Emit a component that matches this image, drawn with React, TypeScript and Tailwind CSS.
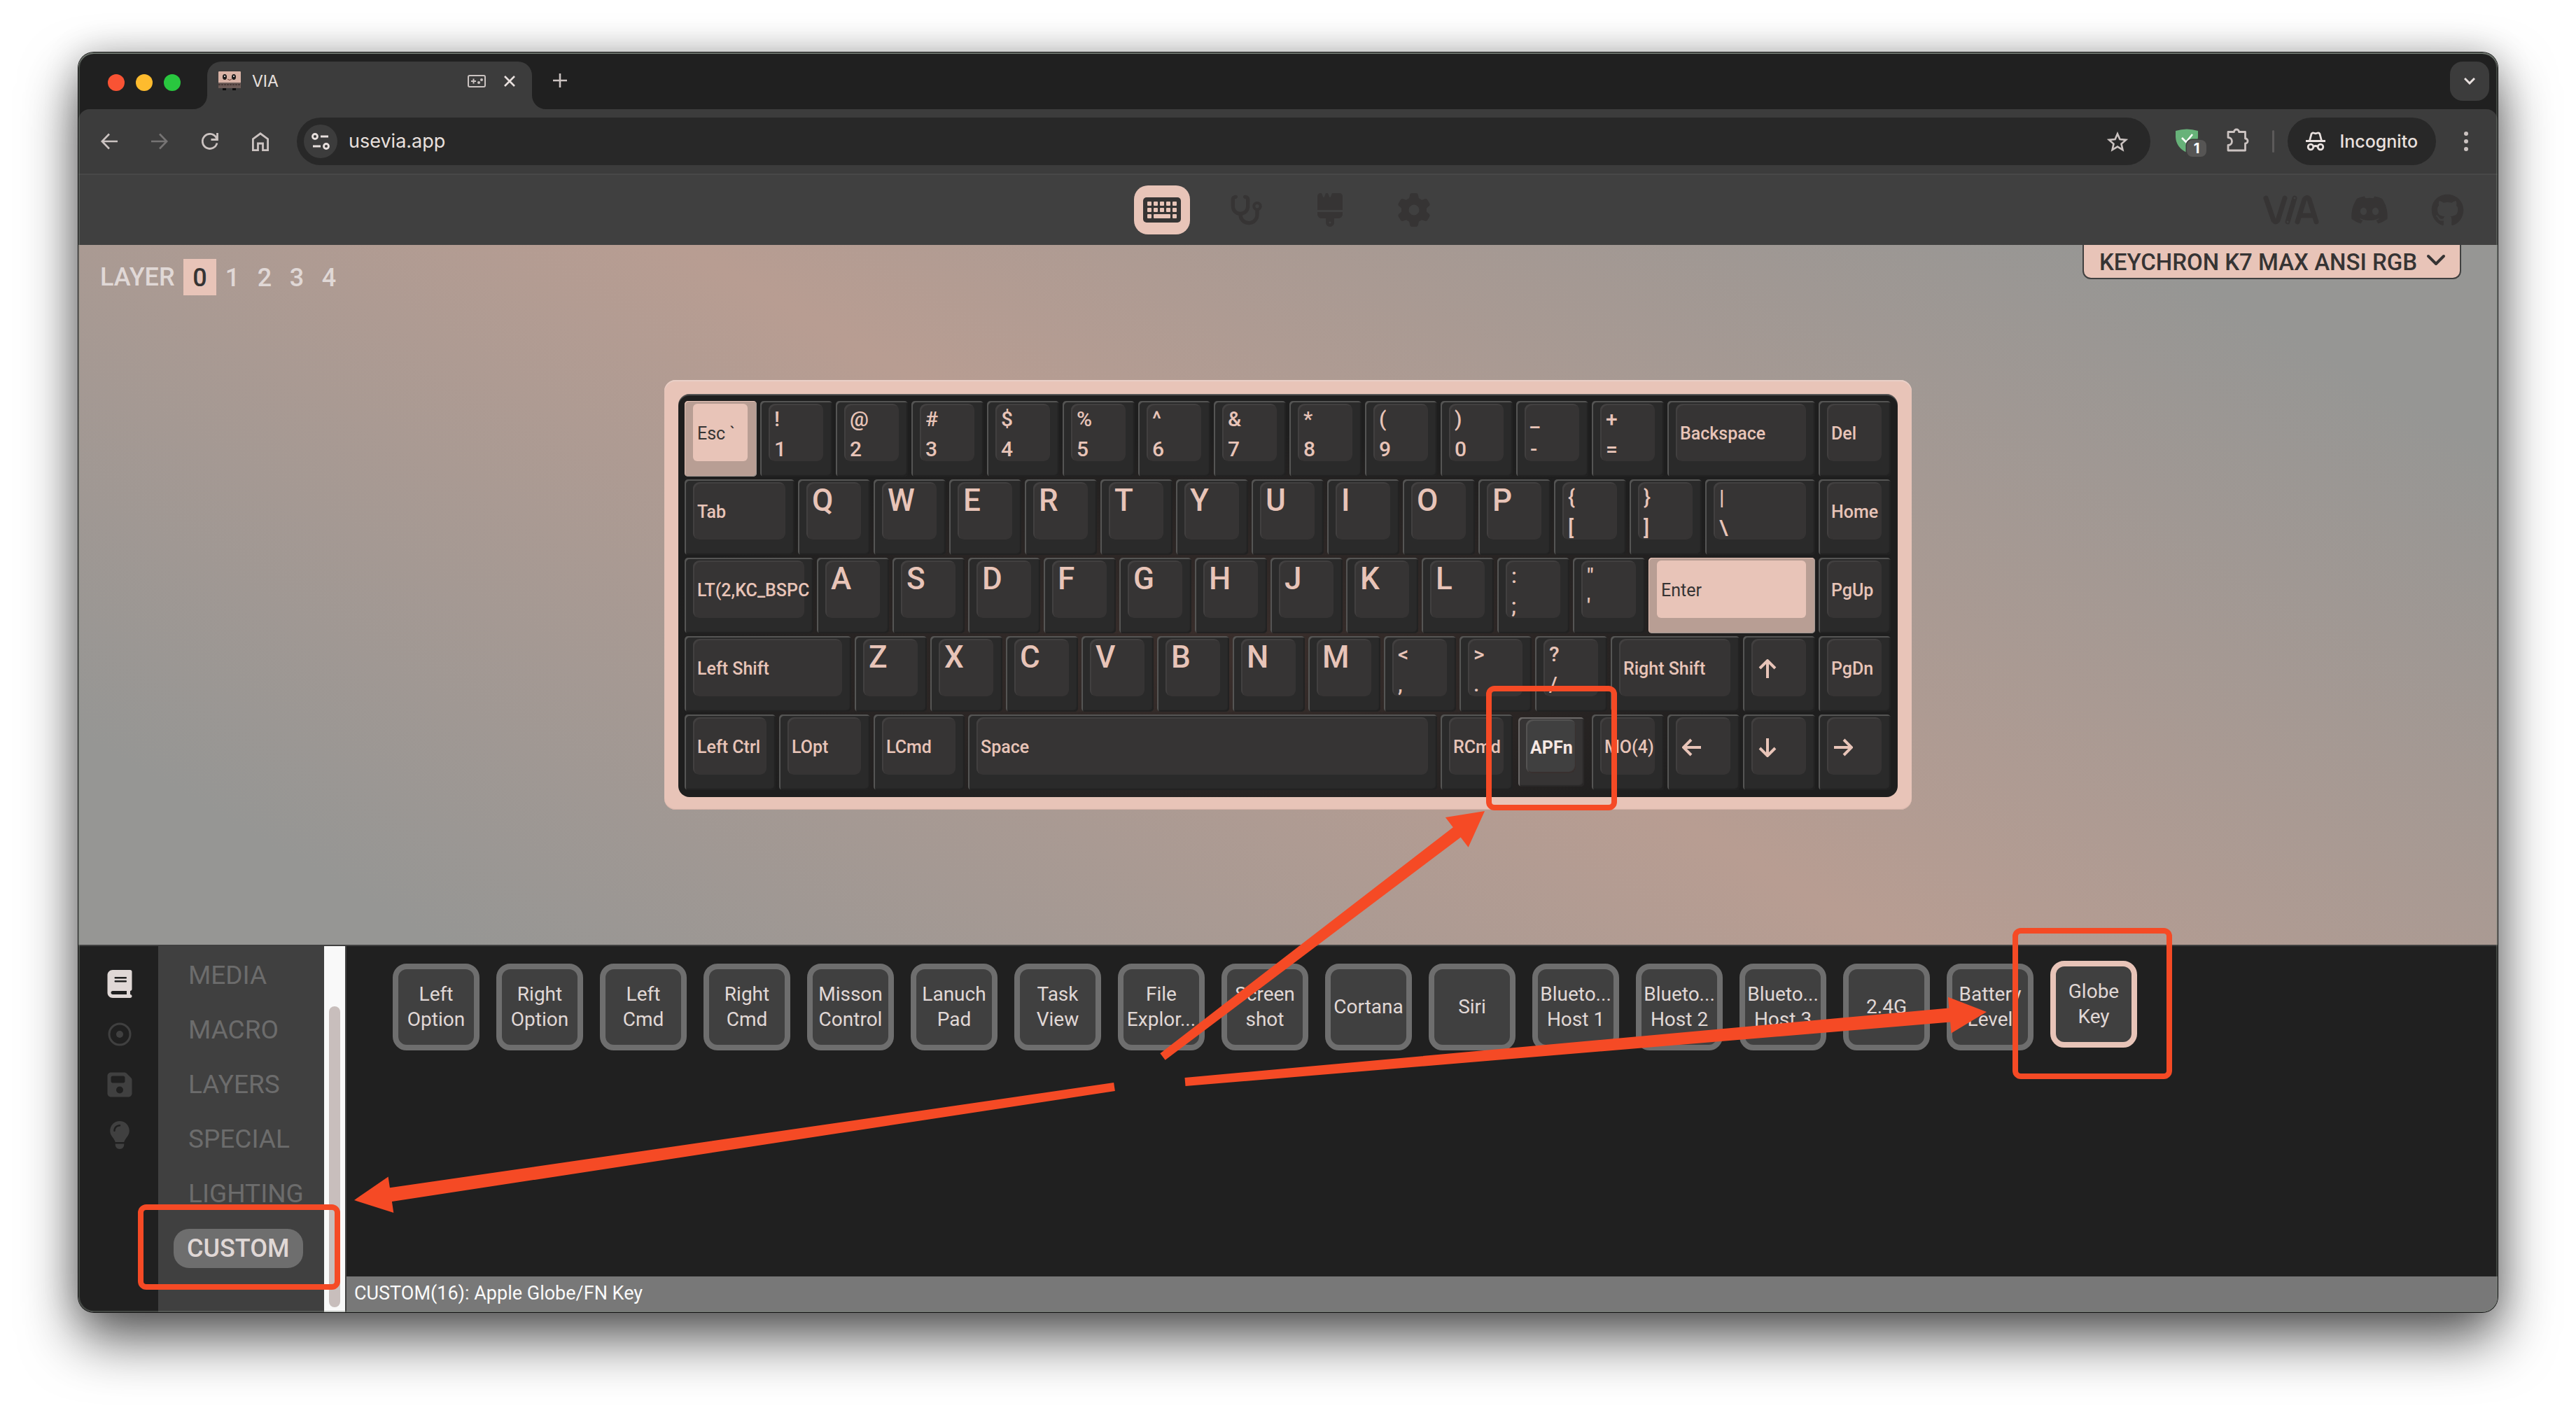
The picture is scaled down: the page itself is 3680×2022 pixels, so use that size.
import React from "react";
import {
  FaStethoscope,
  FaBrush,
  FaGear,
  FaDiscord,
  FaGithub,
  FaBook,
  FaFloppyDisk,
  FaLightbulb,
} from "react-icons/fa6";

type KeyDef = {
  span: string;
  label?: string;
  pair?: [string, string];
  icon?: "up" | "down" | "left" | "right";
  accent?: boolean;
  selected?: boolean;
};

const U1 = "col-span-4";
const U125 = "col-span-5";
const U15 = "col-span-6";
const U175 = "col-span-7";
const U2 = "col-span-8";
const U225 = "col-span-9";
const U625 = "col-span-25";

const letters = (s: string): KeyDef[] => s.split("").map((label) => ({ span: U1, label }));
const pairs = (s: string[]): KeyDef[] =>
  s.map((p) => ({ span: U1, pair: [p[0], p[1]] as [string, string] }));

const KEYS: KeyDef[] = [
  { span: U1, label: "Esc `", accent: true },
  ...pairs(["!1", "@2", "#3", "$4", "%5", "^6", "&7", "*8", "(9", ")0", "_-", "+="]),
  { span: U2, label: "Backspace" },
  { span: U1, label: "Del" },

  { span: U15, label: "Tab" },
  ...letters("QWERTYUIOP"),
  ...pairs(["{[", "}]"]),
  { span: U15, pair: ["|", "\\"] },
  { span: U1, label: "Home" },

  { span: U175, label: "LT(2,KC_BSPC" },
  ...letters("ASDFGHJKL"),
  ...pairs([":;", "\"'"]),
  { span: U225, label: "Enter", accent: true },
  { span: U1, label: "PgUp" },

  { span: U225, label: "Left Shift" },
  ...letters("ZXCVBNM"),
  ...pairs(["<,", ">.", "?/"]),
  { span: U175, label: "Right Shift" },
  { span: U1, icon: "up" },
  { span: U1, label: "PgDn" },

  { span: U125, label: "Left Ctrl" },
  { span: U125, label: "LOpt" },
  { span: U125, label: "LCmd" },
  { span: U625, label: "Space" },
  { span: U1, label: "RCmd" },
  { span: U1, label: "APFn", selected: true },
  { span: U1, label: "MO(4)" },
  { span: U1, icon: "left" },
  { span: U1, icon: "down" },
  { span: U1, icon: "right" },
];

const ARROWS = {
  left: "M27 14H3M13 3L2 14l11 11",
  right: "M1 14h24M15 3l11 11-11 11",
  up: "M14 27V3M3 13L14 2l11 11",
  down: "M14 1v24M3 15l11 11 11-11",
};

function Legend({ k }: { k: KeyDef }) {
  if (k.icon) {
    return (
      <span className="flex h-full items-center pl-[9px] pt-1">
        <svg viewBox="0 0 28 28" className="size-7" fill="none" stroke="currentColor" strokeWidth="4">
          <path d={ARROWS[k.icon]} />
        </svg>
      </span>
    );
  }
  if (k.pair) {
    return (
      <span className="flex flex-col pl-2 text-[30px] leading-[43px]">
        <span>{k.pair[0]}</span>
        <span>{k.pair[1]}</span>
      </span>
    );
  }
  if (k.label && k.label.length === 1) {
    return <span className="block pl-2 text-[44px] leading-[52px]">{k.label}</span>;
  }
  return (
    <span className="flex h-full items-center whitespace-nowrap pl-[6px] pt-1 text-[25px]">
      {k.label}
    </span>
  );
}

function Key({ k }: { k: KeyDef }) {
  let shell =
    "mr-[5px] mb-1 pl-3 pr-[13px] pt-1 pb-[22px] rounded-[5px] bg-[#2a2a2a] text-[#e8c4b8] shadow-[inset_2px_2px_0_#555554,inset_-2px_-2px_1px_#222222]";
  let cap =
    "h-full rounded-[9px] bg-[#363434] shadow-[inset_2px_2px_1px_#434141] font-medium";
  if (k.accent) {
    shell =
      "mr-[5px] mb-1 pl-3 pr-[13px] pt-1 pb-[22px] rounded-[5px] bg-[#b89e94] text-[#363434] shadow-[inset_1px_1px_0_#e8c4b8,inset_-1px_-1px_0_#9d9490]";
    cap = "h-full rounded-md bg-[#e8c4b8] font-normal";
  }
  if (k.selected) {
    shell =
      "ml-[3px] mr-[11px] mt-1 mb-[9px] pl-[11px] pr-3 pt-[3px] pb-[19px] rounded-[5px] bg-[#363434] text-[#f7e8e3] shadow-[inset_2px_2px_0_#6c6968,inset_-2px_-2px_1px_#2a2828]";
    cap =
      "h-full rounded-[9px] bg-[#404040] shadow-[inset_2px_2px_1px_#555453,inset_-1px_-2px_1px_#382f2e] font-bold";
  }
  return (
    <button
      type="button"
      className={k.span + " block text-left " + shell}
      aria-label={k.icon ? "Arrow " + k.icon : undefined}
    >
      <span className={"block " + cap}>
        <Legend k={k} />
      </span>
    </button>
  );
}

const CUSTOM_KEYS: string[][] = [
  ["Left", "Option"],
  ["Right", "Option"],
  ["Left", "Cmd"],
  ["Right", "Cmd"],
  ["Misson", "Control"],
  ["Lanuch", "Pad"],
  ["Task", "View"],
  ["File", "Explor..."],
  ["Screen", "shot"],
  ["Cortana"],
  ["Siri"],
  ["Blueto...", "Host 1"],
  ["Blueto...", "Host 2"],
  ["Blueto...", "Host 3"],
  ["2.4G"],
  ["Battery", "Level"],
  ["Globe", "Key"],
];

function arrow(
  tx: number,
  ty: number,
  px: number,
  py: number,
  tail = 6,
  neck = 10,
  head = 53,
  wing = 26
) {
  const len = Math.hypot(px - tx, py - ty);
  const ux = (px - tx) / len;
  const uy = (py - ty) / len;
  const bx = px - ux * head;
  const by = py - uy * head;
  const at = (x: number, y: number, d: number) =>
    `${(x - uy * d).toFixed(1)},${(y + ux * d).toFixed(1)}`;
  return [
    at(tx, ty, tail),
    at(bx, by, neck),
    at(bx, by, wing),
    `${px},${py}`,
    at(bx, by, -wing),
    at(bx, by, -neck),
    at(tx, ty, -tail),
  ].join(" ");
}

function TabStrip() {
  return (
    <div className="flex h-[81px] items-end bg-[#202020] pr-3">
      <div className="flex h-[76px] items-center gap-4 pl-[42px]">
        <button type="button" aria-label="Close window" className="size-6 rounded-full bg-[#f95334]" />
        <button type="button" aria-label="Minimise window" className="size-6 rounded-full bg-[#febb2e]" />
        <button type="button" aria-label="Zoom window" className="size-6 rounded-full bg-[#29c73f]" />
      </div>
      <svg viewBox="0 0 20 20" className="ml-[18px] size-5 text-[#3c3c3c]" fill="currentColor">
        <path d="M0 20A20 20 0 0 0 20 0V20Z" />
      </svg>
      <div className="flex h-[68px] w-[464px] items-center rounded-t-[20px] bg-[#3c3c3c] px-4 pb-3">
        <svg viewBox="0 0 32 28" className="h-7 w-8">
          <rect width="32" height="17" rx="1" fill="#d9b3a6" />
          <rect y="16" width="32" height="8" fill="#6b5a56" />
          <path d="M0 19h32" stroke="#4a3a38" strokeWidth="2" strokeDasharray="3 1" />
          <ellipse cx="9" cy="8" rx="3" ry="4" fill="#1d1a1a" />
          <ellipse cx="22" cy="8" rx="3" ry="4" fill="#1d1a1a" />
          <circle cx="9" cy="7" r="1" fill="#fff" />
          <circle cx="22" cy="7" r="1" fill="#fff" />
          <path d="M13 11q3 3 6 0" stroke="#6b3f36" strokeWidth="1" fill="none" />
          <path d="M6 24h5v3H6zM20 24h5v3h-5z" fill="#0d0d0d" />
        </svg>
        <span className="ml-4 flex-1 font-['Inter'] text-[23px] leading-7 text-[#e8e0de]">VIA</span>
        <svg viewBox="0 0 26 18" className="h-[18px] w-[26px] text-[#cbc3c1]" fill="none" stroke="currentColor" strokeWidth="2">
          <rect x="1" y="1" width="24" height="16" rx="2" />
          <path d="M5 9h7M8.500 5.500v7" />
          <circle cx="16" cy="11" r="1" fill="currentColor" />
          <circle cx="20" cy="7" r="1" fill="currentColor" />
        </svg>
        <button type="button" aria-label="Close tab" className="ml-[26px] mr-2 text-[#e8e0de]">
          <svg viewBox="0 0 16 16" className="size-4" stroke="currentColor" strokeWidth="2.600">
            <path d="M1 1l14 14M15 1L1 15" />
          </svg>
        </button>
      </div>
      <svg viewBox="0 0 20 20" className="size-5 text-[#3c3c3c]" fill="currentColor">
        <path d="M0 0A20 20 0 0 0 20 20H0Z" />
      </svg>
      <button type="button" aria-label="New tab" className="mb-[30px] ml-[9px] text-[#cbc3c1]">
        <svg viewBox="0 0 22 22" className="size-[22px]" stroke="currentColor" strokeWidth="2.600">
          <path d="M11 1v20M1 11h20" />
        </svg>
      </button>
      <button
        type="button"
        aria-label="Search tabs"
        className="mb-3 ml-auto flex size-14 items-center justify-center rounded-[18px] bg-[#3c3c3c] text-[#e8e0de]"
      >
        <svg viewBox="0 0 16 10" className="h-[10px] w-4" fill="none" stroke="currentColor" strokeWidth="3">
          <path d="M1 1l7 7 7-7" />
        </svg>
      </button>
    </div>
  );
}

function Toolbar() {
  return (
    <div className="bg-[#202020]">
      <div className="flex h-[92px] items-center rounded-t-2xl bg-[#3c3c3c] pl-2 pr-[42px] font-['Inter'] text-[#cbc3c1]">
        <button type="button" aria-label="Back" className="flex w-[72px] justify-center">
          <svg viewBox="0 0 24 24" className="size-6" fill="none" stroke="currentColor" strokeWidth="2.600">
            <path d="M24 12H2M12 1.500L1.800 12 12 22.500" />
          </svg>
        </button>
        <button type="button" aria-label="Forward" className="flex w-[72px] justify-center text-[#767474]">
          <svg viewBox="0 0 24 24" className="size-6" fill="none" stroke="currentColor" strokeWidth="2.600">
            <path d="M0 12h22M12 1.500L22.200 12 12 22.500" />
          </svg>
        </button>
        <button type="button" aria-label="Reload" className="flex w-[72px] justify-center">
          <svg viewBox="0 0 24 24" className="size-6" fill="none" stroke="currentColor" strokeWidth="2.800">
            <path d="M22 14.500A10.500 10.500 0 1 1 20.500 6L22 8.500M22.500 0v9.500H13.500" />
          </svg>
        </button>
        <button type="button" aria-label="Home" className="flex w-[72px] justify-center">
          <svg viewBox="0 0 24 27" className="h-[27px] w-6" fill="none" stroke="currentColor" strokeWidth="2.800">
            <path d="M1.400 9.600L12 1.800l10.600 7.800v16H15.500V16h-7v9.600H1.400Z" />
          </svg>
        </button>
        <div className="ml-4 flex h-[68px] flex-1 items-center rounded-full bg-[#282828] pl-[10px] pr-8">
          <button
            type="button"
            aria-label="Site settings"
            className="flex size-12 items-center justify-center rounded-full bg-[#3c3c3c] text-[#e8e0de]"
          >
            <svg viewBox="0 0 26 24" className="h-6 w-[26px]" fill="none" stroke="currentColor" strokeWidth="2.800">
              <circle cx="5" cy="5" r="3.500" />
              <path d="M13 5h11M2 19h11" />
              <circle cx="21" cy="19" r="3.500" />
            </svg>
          </button>
          <input
            aria-label="Address"
            defaultValue="usevia.app"
            className="ml-4 flex-1 bg-transparent text-[27px] leading-8 text-[#e8e0de] outline-none"
          />
          <button type="button" aria-label="Bookmark this page">
            <svg viewBox="0 0 30 29" className="h-[29px] w-[30px]" fill="none" stroke="currentColor" strokeWidth="2.600">
              <path d="M15 3.200l3.400 7.900 8.600.8-6.500 5.700 1.900 8.400L15 21.600 7.600 26l1.900-8.400L3 11.900l8.600-.8Z" />
            </svg>
          </button>
        </div>
        <button type="button" aria-label="Shield extension" className="ml-9 flex h-11 w-11">
          <svg viewBox="0 0 44 44" className="size-11">
            <path d="M0 7Q16 2 32 7V16Q31 31 16 38Q1 31 0 16Z" fill="#67b279" />
            <path d="M9 17l6 6 9-11" fill="none" stroke="#fff" strokeWidth="2.600" />
            <rect x="14.500" y="18.500" width="31" height="31" rx="9" fill="#3c3c3c" />
            <rect x="16" y="20" width="28" height="24" rx="8" fill="#565554" />
            <text x="30" y="39" textAnchor="middle" fill="#fff" fontFamily="Inter, sans-serif" fontWeight="700" fontSize="20">
              1
            </text>
          </svg>
        </button>
        <button type="button" aria-label="Extensions" className="ml-7 pb-1">
          <svg viewBox="0 0 34 34" className="size-[34px]" fill="none" stroke="currentColor" strokeWidth="2.800" strokeLinejoin="round">
            <path d="M3 5.500H11.500A3.400 3.400 0 0 1 18.500 5.500H27.500V15A3.400 3.400 0 0 1 27.500 22V32H3V24.500A5 5 0 0 0 3 13.500Z" />
          </svg>
        </button>
        <span className="ml-8 h-8 w-[3px] rounded bg-[#5c5a5a]" />
        <button type="button" className="ml-[19px] flex h-[68px] items-center gap-5 rounded-full bg-[#282828] px-[26px] text-[#e8e0de]">
          <svg viewBox="0 0 28 28" className="size-7" fill="none" stroke="currentColor" strokeWidth="2.800">
            <path d="M0 13.500h28M5.500 13l2.500-9.500q1-2 3-1.500l3 .800 3-.800q2-.500 3 1.500L22.500 13" />
            <circle cx="7" cy="22" r="3.800" />
            <circle cx="21" cy="22" r="3.800" />
            <path d="M11 21.500q3-2 6 0" />
          </svg>
          <span className="text-[25px] font-medium leading-8">Incognito</span>
        </button>
        <button type="button" aria-label="Menu" className="ml-10">
          <svg viewBox="0 0 6 28" className="h-7 w-[6px]" fill="currentColor">
            <circle cx="3" cy="3" r="3" />
            <circle cx="3" cy="14" r="3" />
            <circle cx="3" cy="25" r="3" />
          </svg>
        </button>
      </div>
    </div>
  );
}

function AppHeader() {
  return (
    <header className="grid h-[102px] grid-cols-[1fr_auto_1fr] items-center border-t-2 border-[#484848] bg-[#404040] text-[#363434]">
      <span />
      <nav className="flex gap-10">
        <button type="button" aria-label="Configure" className="flex h-[70px] w-20 items-center justify-center rounded-[20px] bg-[#e8c4b8]">
          <svg viewBox="0 0 54 36" className="h-9 w-[54px]">
            <rect width="54" height="36" rx="5" fill="#363434" />
            <g fill="#e8c4b8">
              {[6, 15, 24, 33, 42].map((x) => (
                <rect key={x} x={x} y="6" width="6" height="6" rx="1" />
              ))}
              {[6, 15, 24, 33, 42].map((x) => (
                <rect key={x} x={x} y="15" width="6" height="6" rx="1" />
              ))}
              <rect x="6" y="24" width="6" height="6" rx="1" />
              <rect x="15" y="24" width="24" height="6" rx="1" />
              <rect x="42" y="24" width="6" height="6" rx="1" />
            </g>
          </svg>
        </button>
        <button type="button" aria-label="Key tester" className="flex h-[70px] w-20 items-center justify-center">
          <FaStethoscope className="size-12" />
        </button>
        <button type="button" aria-label="Design" className="flex h-[70px] w-20 items-center justify-center">
          <FaBrush className="size-12" />
        </button>
        <button type="button" aria-label="Settings" className="flex h-[70px] w-20 items-center justify-center">
          <FaGear className="size-12" />
        </button>
      </nav>
      <div className="flex items-center justify-end pr-12">
        <a href="#via" aria-label="VIA">
          <svg viewBox="0 0 80 42" className="h-[42px] w-20" fill="none" stroke="currentColor" strokeWidth="7" strokeLinecap="round" strokeLinejoin="round">
            <path d="M4 4L15 36Q18 40 21 36L31 4" />
            <path d="M45 4L35 38" />
            <path d="M49 38L59 6Q63 1 66 6L76 38M55 29H70" />
            <path d="M45 4h.1M35 38h.1" stroke="#404040" strokeWidth="3" />
          </svg>
        </a>
        <a href="#discord" aria-label="Discord" className="ml-11">
          <FaDiscord className="size-[56px]" />
        </a>
        <a href="#github" aria-label="GitHub" className="ml-[60px]">
          <FaGithub className="size-[47px]" />
        </a>
      </div>
    </header>
  );
}

function Stage() {
  return (
    <section className="relative flex flex-1 items-center justify-center bg-[linear-gradient(30deg,#969694_10%,#b89d92_50%,#969694_90%)] py-24">
      <div className="absolute left-[31px] top-5 flex h-[52px] items-center text-[36px] font-medium text-[#e0d8d6]">
        <span className="w-[119px]">LAYER</span>
        {["0", "1", "2", "3", "4"].map((n) => (
          <button
            key={n}
            type="button"
            className={n === "0" ? "h-full w-[47px] bg-[#e8c4b8] text-[#363434]" : "h-full w-[46px]"}
          >
            {n}
          </button>
        ))}
      </div>
      <div className="absolute right-[52px] top-0 flex h-[49px] items-center rounded-b-xl border-2 border-t-0 border-[#404040] bg-[#e8c4b8] pl-[22px] pr-5 text-[#363434]">
        <select
          aria-label="Keyboard"
          className="h-full appearance-none bg-transparent pb-1 pr-3 text-[33px] font-medium outline-none"
        >
          <option>KEYCHRON K7 MAX ANSI RGB</option>
        </select>
        <svg viewBox="0 0 28 18" className="mb-1 h-[18px] w-7" fill="none" stroke="currentColor" strokeWidth="4" strokeLinecap="round" strokeLinejoin="round">
          <path d="M3 3l11 11L25 3" />
        </svg>
      </div>
      <div className="rounded-2xl bg-[#e8c4b8] px-5 pb-[18px] pt-5 shadow-[inset_0_2px_1px_#e9d0c8,inset_0_-1px_1px_#d4b3a8]">
        <div className="grid auto-rows-[112px] grid-cols-[repeat(64,27px)] rounded-2xl bg-[#262423] bg-[radial-gradient(ellipse_at_45%_65%,#3b2f2c,#1e1e1e_60%)] pb-[6px] pl-[9px] pr-[5px] pt-[10px] shadow-[inset_0_2px_1px_#555]">
          {KEYS.map((k, i) => (
            <Key key={i} k={k} />
          ))}
        </div>
      </div>
    </section>
  );
}

function ConfigurePane() {
  return (
    <section className="flex h-[525px] border-t-2 border-[#404040] bg-[#202020]">
      <nav className="flex w-[114px] flex-col items-center pl-1 pt-[18px] text-[#404040]">
        <button type="button" aria-label="Keymap" className="flex h-[72px] items-center text-[#e0d8d6]">
          <FaBook className="size-10" />
        </button>
        <button type="button" aria-label="Macros" className="flex h-[72px] items-center">
          <svg viewBox="0 0 34 34" className="size-[34px]" fill="none" stroke="currentColor" strokeWidth="3">
            <circle cx="17" cy="17" r="15" />
            <circle cx="17" cy="17" r="5" fill="currentColor" stroke="none" />
          </svg>
        </button>
        <button type="button" aria-label="Save and load" className="flex h-[72px] items-center">
          <FaFloppyDisk className="size-10" />
        </button>
        <button type="button" aria-label="Lighting" className="flex h-[72px] items-center">
          <FaLightbulb className="size-10" />
        </button>
      </nav>
      <ul className="w-[237px] bg-[#404040] pl-[22px] pt-[3px] text-[37px] leading-[56px] text-[#6c6c6c]">
        {["MEDIA", "MACRO", "LAYERS", "SPECIAL", "LIGHTING"].map((m) => (
          <li key={m} className="flex h-[78px] items-center">
            <button type="button" className="h-14 px-[21px]">{m}</button>
          </li>
        ))}
        <li className="flex h-[78px] items-center">
          <button type="button" className="h-14 rounded-[22px] bg-[#6e6e6e] px-[19px] text-[36px] font-medium text-[#e0d8d6]">
            CUSTOM
          </button>
        </li>
      </ul>
      <div className="flex w-8 justify-center border-r-2 border-[#404040] bg-[#f9f9f9] pb-[7px] pt-[86px]">
        <span className="w-4 rounded-full bg-[#c8bebc]" />
      </div>
      <div className="flex flex-1 flex-col">
        <div className="flex flex-1 flex-wrap content-start gap-6 pl-[66px] pt-[25px]">
          {CUSTOM_KEYS.map((lines, i) => (
            <button
              key={i}
              type="button"
              className={
                i === CUSTOM_KEYS.length - 1
                  ? "-mt-1 mb-1 flex size-[124px] flex-col items-center justify-center rounded-[20px] border-8 border-[#e8c4b8] bg-[#404040] text-[28px] leading-9 text-[#e0d8d6]"
                  : "flex size-[124px] flex-col items-center justify-center rounded-[20px] border-8 border-[#6e6e6e] bg-[#404040] text-[28px] leading-9 text-[#e0d8d6]"
              }
            >
              {lines.map((l) => (
                <span key={l}>{l}</span>
              ))}
            </button>
          ))}
        </div>
        <p className="h-[51px] bg-[#787878] pl-[11px] text-[27px] leading-[48px] text-[#f9f9f9]">
          CUSTOM(16): Apple Globe/FN Key
        </p>
      </div>
    </section>
  );
}

function Annotations() {
  return (
    <div className="pointer-events-none absolute inset-0">
      <svg className="absolute inset-0 h-full w-full" fill="#f54a25">
        <polygon points={arrow(1549, 1435, 2009, 1084, 6, 9, 50, 27)} />
        <polygon points={arrow(1581, 1471, 2726, 1371)} />
        <polygon points={arrow(1480, 1478, 394, 1640)} />
      </svg>
      <div className="absolute left-[2011px] top-[905px] h-[178px] w-[187px] rounded-xl border-8 border-[#f54a25]" />
      <div className="absolute left-[2763px] top-[1251px] h-[216px] w-[228px] rounded-xl border-8 border-[#f54a25]" />
      <div className="absolute left-[85px] top-[1646px] h-[122px] w-[289px] rounded-xl border-8 border-[#f54a25]" />
    </div>
  );
}

export default function App() {
  return (
    <main className="flex min-h-screen flex-col bg-white px-28 pb-[147px] pt-[75px] font-['Roboto',sans-serif]">
      <div className="relative flex flex-1 flex-col rounded-[22px] shadow-[0_0_0_1px_#111,0_38px_80px_rgba(0,0,0,0.65),0_0_50px_rgba(0,0,0,0.2)]">
        <div className="flex flex-1 flex-col overflow-hidden rounded-[22px]">
          <TabStrip />
          <Toolbar />
          <AppHeader />
          <Stage />
          <ConfigurePane />
        </div>
        <div className="pointer-events-none absolute inset-0 rounded-[22px] shadow-[inset_0_2px_0_rgba(150,160,150,0.5),inset_0_0_0_2px_rgba(120,130,120,0.4)]" />
        <Annotations />
      </div>
    </main>
  );
}
